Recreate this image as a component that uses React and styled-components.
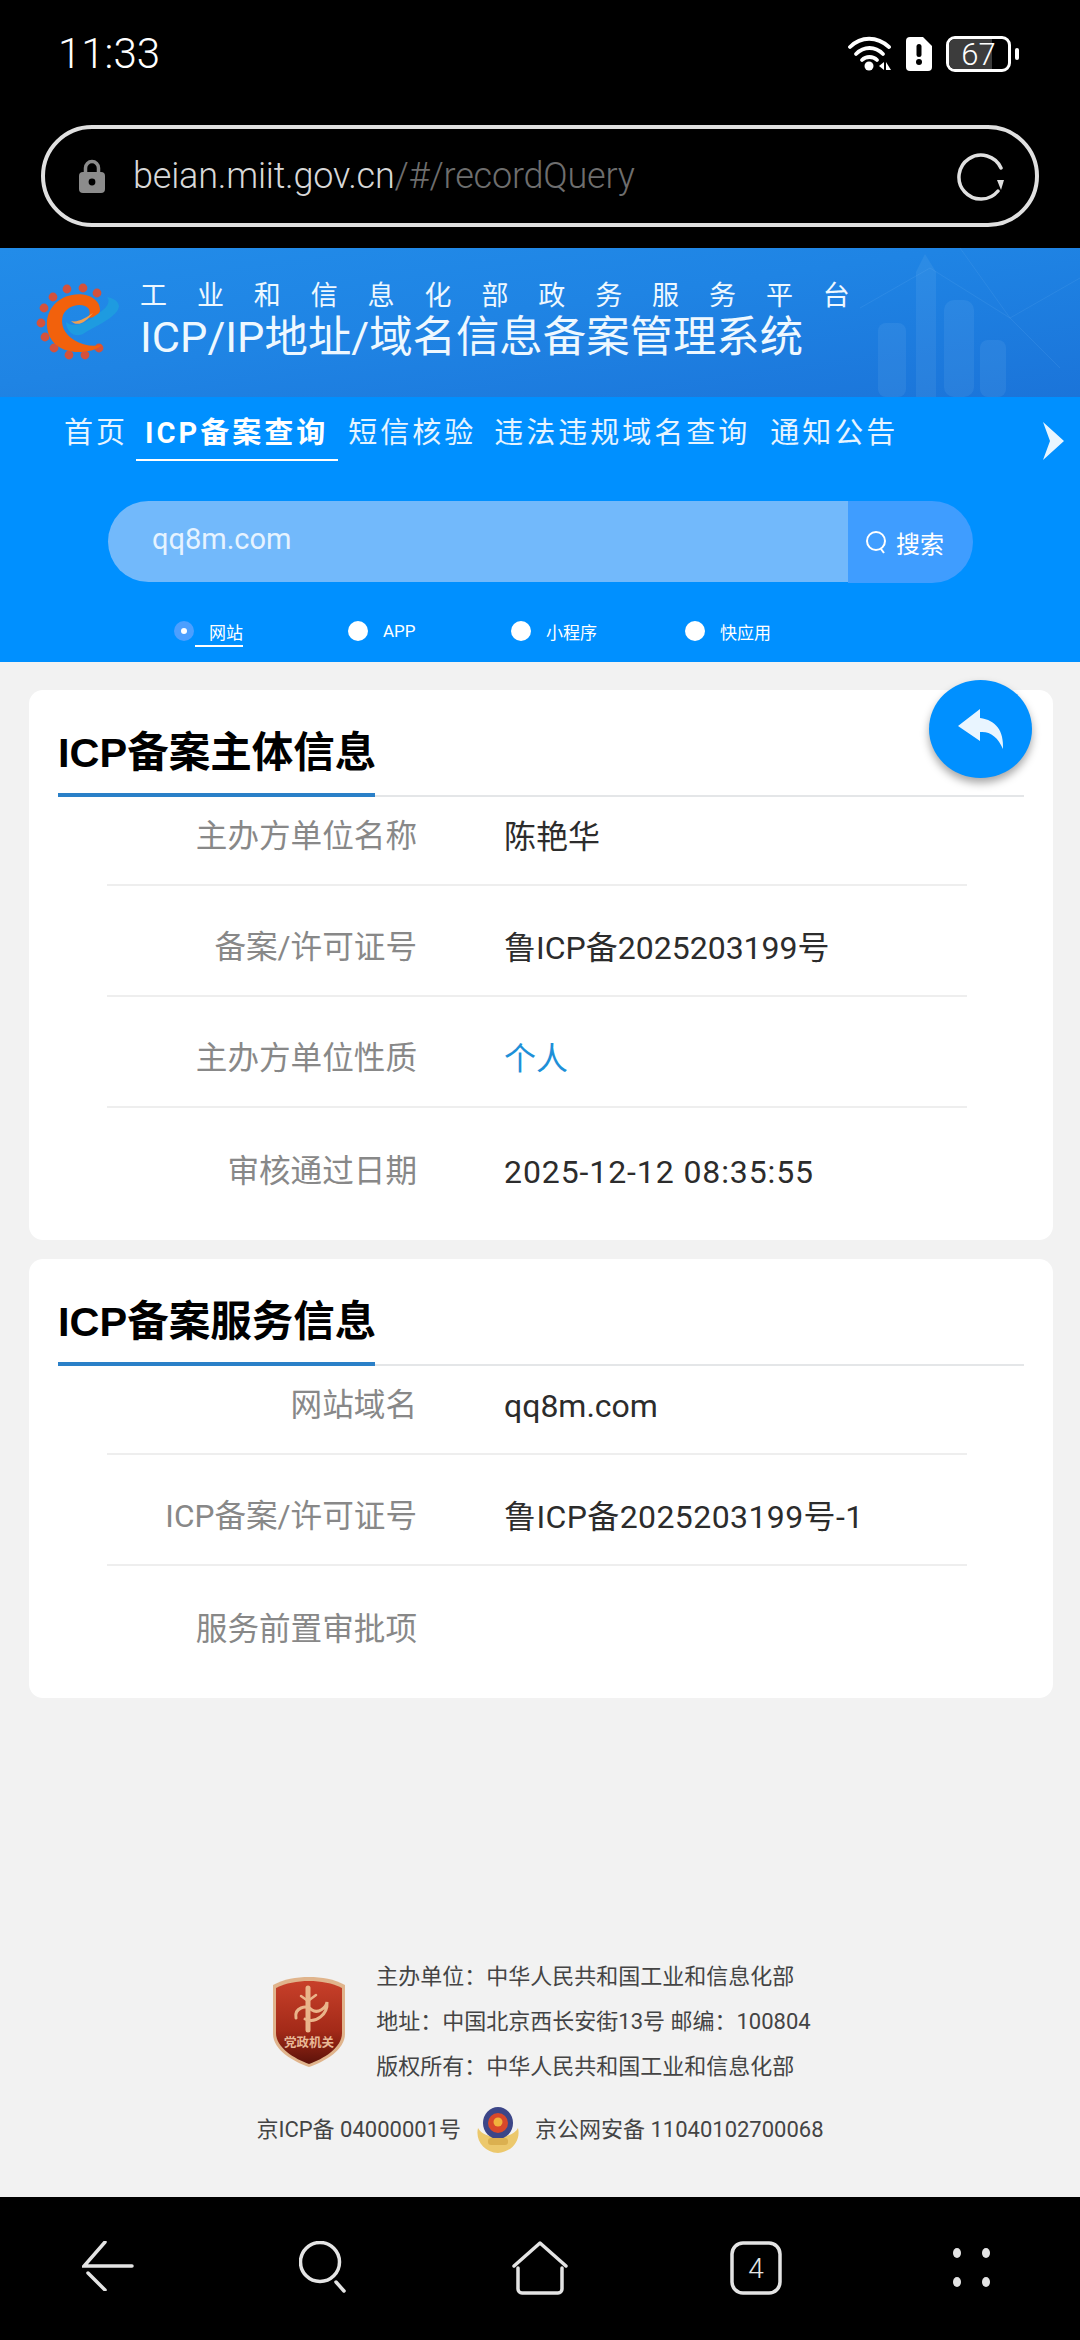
import React from 'react';
import styled, { createGlobalStyle } from 'styled-components';

const GlobalStyle = createGlobalStyle`
  html, body {
    margin: 0;
    padding: 0;
    background: #f2f2f2;
  }
  * {
    box-sizing: border-box;
  }
`;

const FONT = `Roboto, "Noto Sans CJK SC", sans-serif`;

const Page = styled.div`
  width: 1080px;
  height: 2340px;
  display: flex;
  flex-direction: column;
  overflow: hidden;
  background: #f2f2f2;
  font-family: ${FONT};
`;

const BrowserTop = styled.div`
  height: 248px;
  background: #000;
  padding: 0 41px 0 41px;
  flex: none;
`;

const StatusBar = styled.div`
  height: 125px;
  padding: 24px 20px 0 17px;
  display: flex;
  justify-content: space-between;
  align-items: flex-start;
  color: #fff;
`;

const Clock = styled.span`
  font-size: 42px;
  font-weight: 300;
  line-height: 60px;
`;

const StatusIcons = styled.div`
  display: flex;
  align-items: center;
  height: 60px;
  gap: 14px;
`;

const BatteryBox = styled.div`
  position: relative;
  width: 65px;
  height: 36px;
  border: 3px solid #fff;
  border-radius: 9px;
  display: flex;
  align-items: center;
  justify-content: center;
  font-size: 31px;
  font-weight: 300;
  overflow: hidden;
  color: #fff;
`;

const BatteryLevel = styled.div`
  position: absolute;
  inset: 0 16px 0 0;
  background: #3c3c3c;
`;

const BatteryText = styled.span`
  position: relative;
`;

const BatteryTip = styled.div`
  width: 4px;
  height: 12px;
  border-radius: 2px;
  background: #fff;
  margin-left: -10px;
`;

const AddressBar = styled.div`
  height: 102px;
  border: 4px solid #e0e0e0;
  border-radius: 51px;
  display: flex;
  align-items: center;
  padding: 0 27px 0 34px;
  gap: 28px;
`;

const Url = styled.div`
  flex: 1;
  font-size: 36px;
  font-weight: 300;
  letter-spacing: -0.2px;
  color: #d8d8d8;
`;

const UrlRest = styled.span`
  color: #6e6e6e;
`;

const Banner = styled.div`
  position: relative;
  height: 149px;
  flex: none;
  overflow: hidden;
  background: linear-gradient(172deg, #228ce9 0%, #1f84e4 45%, #1b74d9 100%);
  padding: 32px 0 0 140px;
  color: #eef8ff;
`;

const BannerArt = styled.svg`
  position: absolute;
  left: 0;
  top: 0;
`;

const BannerTitle = styled.div`
  position: relative;
  font-size: 27px;
  line-height: 32px;
  letter-spacing: 29.9px;
  white-space: nowrap;
`;

const BannerName = styled.div`
  position: relative;
  font-size: 43.4px;
  line-height: 52px;
  white-space: nowrap;
`;

const BlueArea = styled.div`
  flex: none;
  height: 265px;
  background: #0090ff;
  display: flex;
  flex-direction: column;
`;

const Nav = styled.div`
  position: relative;
  height: 104px;
  padding: 12px 0 0 64px;
  display: flex;
  align-items: flex-start;
`;

const NavItem = styled.div`
  position: relative;
  margin-left: ${(p) => p.$gap}px;
  font-size: 29px;
  line-height: 48px;
  letter-spacing: 3px;
  color: #e6f4ff;
  font-weight: ${(p) => (p.$active ? 700 : 400)};
  white-space: nowrap;
  ${(p) => p.$active && `
    color: #fff;
    &::after {
      content: '';
      position: absolute;
      left: -9px;
      right: -10px;
      bottom: -4px;
      height: 2px;
      background: #fff;
    }
  `}
`;

const NavArrow = styled.svg`
  position: absolute;
  left: 1041px;
  top: 25px;
`;

const SearchBar = styled.div`
  margin-left: 108px;
  width: 865px;
  height: 82px;
  display: flex;
  align-items: flex-start;
`;

const SearchInput = styled.div`
  width: 740px;
  height: 81px;
  background: #72b9fb;
  border-radius: 41px 0 0 41px;
  color: #e6f3ff;
  font-size: 29px;
  line-height: 76px;
  padding-left: 44px;
`;

const SearchButton = styled.div`
  width: 125px;
  height: 82px;
  background: #3f9dff;
  border-radius: 0 41px 41px 0;
  display: flex;
  align-items: center;
  padding-left: 17px;
  gap: 9px;
  color: #fff;
  font-size: 24px;
`;

const SearchGlass = styled.svg`
  flex: none;
`;

const RadioRow = styled.div`
  display: flex;
  margin-top: 32px;
  padding-left: 174px;
`;

const RadioItem = styled.div`
  width: ${(p) => p.$width}px;
  display: flex;
  align-items: center;
  height: 32px;
  gap: 15px;
  color: #fff;
  font-size: 17px;
`;

const RadioDot = styled.span`
  width: 20px;
  height: 20px;
  border-radius: 50%;
  display: flex;
  align-items: center;
  justify-content: center;
  background: ${(p) => (p.$on ? '#4c9fff' : '#fff')};
  &::after {
    content: '';
    width: 6px;
    height: 6px;
    border-radius: 50%;
    background: ${(p) => (p.$on ? '#fff' : 'transparent')};
  }
`;

const RadioLabel = styled.span`
  ${(p) => p.$on && `
    position: relative;
    &::after {
      content: '';
      position: absolute;
      left: -14px;
      right: 0;
      bottom: -3px;
      height: 1.5px;
      background: #fff;
    }
  `}
`;

const Content = styled.div`
  position: relative;
  flex: 1;
  padding: 28px 27px 0 29px;
  display: flex;
  flex-direction: column;
  gap: 19px;
`;

const Fab = styled.div`
  position: absolute;
  left: 929px;
  top: 18px;
  width: 103px;
  height: 98px;
  border-radius: 50%;
  background: #0090ff;
  box-shadow: 0 5px 8px rgba(0, 0, 0, 0.35);
  display: flex;
  align-items: center;
  justify-content: center;
`;

const Card = styled.section`
  background: #fff;
  border-radius: 14px;
  padding: 0 29px 21px;
`;

const CardHead = styled.div`
  height: 107px;
  display: flex;
  align-items: flex-end;
  border-bottom: 2px solid #e4e6e8;
`;

const CardTitle = styled.h2`
  margin: 0 0 -2px;
  width: 317px;
  height: 90px;
  padding-top: 18px;
  border-bottom: 4px solid #2a80c8;
  font-size: 41.5px;
  line-height: 56px;
  font-weight: 700;
  color: #000;
  white-space: nowrap;
  font-family: "Liberation Sans", "Noto Sans CJK SC", sans-serif;
`;

const Row = styled.div`
  margin: 0 57px 0 49px;
  height: 111px;
  display: grid;
  grid-template-columns: 310px 1fr;
  column-gap: 87px;
  align-items: end;
  padding-bottom: 15px;
  border-bottom: 2px solid #eeeeee;
  font-size: 32px;
  line-height: 64px;
  ${CardHead} + & {
    height: 89px;
  }
  &:last-child {
    border-bottom: none;
  }
`;

const RowLabel = styled.div`
  text-align: right;
  color: #888;
  font-size: 31.6px;
`;

const RowValue = styled.div`
  color: ${(p) => (p.$link ? '#1e90d8' : '#2c2c2c')};
  letter-spacing: ${(p) => p.$tracking || 0}px;
`;

const Footer = styled.footer`
  margin-top: auto;
  padding-bottom: 45px;
  display: flex;
  flex-direction: column;
  align-items: center;
  color: #444;
  font-size: 22px;
  line-height: 45px;
  margin-left: -29px;
  margin-right: -27px;
  white-space: nowrap;
`;

const FooterTop = styled.div`
  display: flex;
  align-items: center;
  gap: 30px;
  margin-left: 3px;
  position: relative;
  top: 2px;
`;

const FooterBottom = styled.div`
  display: flex;
  align-items: center;
  gap: 15px;
  margin-top: 20px;
  height: 45px;
`;

const BottomBar = styled.nav`
  flex: none;
  height: 143px;
  background: #000;
  display: grid;
  grid-template-columns: repeat(5, 216px);
  justify-items: center;
  padding-top: 44px;
  align-items: start;
`;

const info = [
  { label: '主办方单位名称', value: '陈艳华' },
  { label: '备案/许可证号', value: '鲁ICP备2025203199号' },
  { label: '主办方单位性质', value: '个人', link: true },
  { label: '审核通过日期', value: '2025-12-12 08:35:55', tracking: 0.9 },
];

const service = [
  { label: '网站域名', value: 'qq8m.com' },
  { label: 'ICP备案/许可证号', value: '鲁ICP备2025203199号-1', tracking: 0.4 },
  { label: '服务前置审批项', value: '' },
];

const navItems = [
  { text: '首页', gap: 0 },
  { text: 'ICP备案查询', gap: 17 },
  { text: '短信核验', gap: 20 },
  { text: '违法违规域名查询', gap: 18 },
  { text: '通知公告', gap: 20 },
].map((n, i) => ({ ...n, active: i === 1 }));

const radios = [
  { text: '网站', width: 174, on: true },
  { text: 'APP', width: 163 },
  { text: '小程序', width: 174 },
  { text: '快应用', width: 120 },
];

const gearDots = [
  [97, 45], [83, 40], [67, 41], [53, 49], [44, 60], [41, 75], [45, 89], [54, 100], [69, 107], [85, 107], [99, 100],
];

function InfoCard({ title, rows }) {
  return (
    <Card>
      <CardHead>
        <CardTitle>{title}</CardTitle>
      </CardHead>
      {rows.map((r) => (
        <Row key={r.label}>
          <RowLabel>{r.label}</RowLabel>
          <RowValue $link={r.link} $tracking={r.tracking}>{r.value}</RowValue>
        </Row>
      ))}
    </Card>
  );
}

function Wifi() {
  return (
    <svg width="44" height="36" viewBox="0 0 44 36" fill="none" stroke="#fff" strokeLinecap="round">
      <path d="M2 11C13 0 29 0 41 11" strokeWidth="3.8" />
      <path d="M8 18C16 10 27 10 35 18" strokeWidth="3.8" />
      <path d="M14 24C18 20 25 20 29 24" strokeWidth="3.8" />
      <circle cx="21" cy="30" r="4.5" fill="#fff" stroke="none" />
      <path d="M36 26l-5 4 5 4zM38 26l5 8h-5z" fill="#fff" stroke="none" />
    </svg>
  );
}

function Sim() {
  return (
    <svg width="26" height="34" viewBox="0 0 26 34">
      <path d="M4 0H17L26 9V30a4 4 0 0 1-4 4H4a4 4 0 0 1-4-4V4a4 4 0 0 1 4-4Z" fill="#fff" />
      <rect x="10.5" y="7" width="5" height="13" rx="2.5" fill="#000" />
      <circle cx="13" cy="25" r="3" fill="#000" />
    </svg>
  );
}

function BannerDecor() {
  return (
    <BannerArt width="1080" height="149" viewBox="0 0 1080 149">
      <g stroke="#8cc8f8" strokeWidth="1" opacity="0.12" fill="none">
        <path d="M860 60L930 20L1010 70L1080 30M1010 70L1060 120M960 0L1010 70" />
      </g>
      <g fill="#9ccff5" opacity="0.1">
        <path d="M916 149V24l9-18 11 18V149Z" />
        <rect x="878" y="75" width="28" height="74" rx="8" />
        <rect x="944" y="52" width="30" height="97" rx="10" />
        <rect x="980" y="92" width="26" height="57" rx="8" />
      </g>
      {gearDots.map(([x, y]) => (
        <circle key={x + '-' + y} cx={x} cy={y} r="4.4" fill="#d4523c" />
      ))}
      <path
        d="M100 62C100 50 85 44 72 47C55 50 46 64 47 78C48 95 62 104 78 104C88 104 96 102 102 97C92 99 82 97 74 92C64 86 60 76 63 67C67 58 78 55 85 58C90 60 91 65 88 70C94 70 100 67 100 62Z"
        fill="#f2610c"
      />
      <path d="M66 74C66 84 76 92 86 84C100 76 118 68 119 58C118 52 112 50 107 49C112 56 104 62 92 70C84 76 72 80 66 74Z" fill="#1e9be0" />
      <path d="M71 73C78 80 87 73 93 65C87 69 78 75 71 73Z" fill="#f0a050" />
    </BannerArt>
  );
}

function PartyBadge() {
  return (
    <svg width="74" height="92" viewBox="0 0 74 92">
      <defs>
        <linearGradient id="badgeFill" x1="0" y1="0" x2="0" y2="1">
          <stop offset="0" stopColor="#c8402a" />
          <stop offset="0.6" stopColor="#a32a18" />
          <stop offset="1" stopColor="#5c120a" />
        </linearGradient>
      </defs>
      <path d="M37 1C50 1 62 3 73 9V58C73 74 52 86 37 91C22 86 1 74 1 58V9C12 3 24 1 37 1Z" fill="#e0b48c" />
      <path d="M37 5C49 5 60 7 70 12V57C70 72 51 83 37 88C23 83 4 72 4 57V12C14 7 25 5 37 5Z" fill="url(#badgeFill)" />
      <g stroke="#eab48a" fill="none" strokeLinecap="round">
        <path d="M36 12V54" strokeWidth="5" />
        <path d="M29 20L36 25L44 19" strokeWidth="2.5" />
        <path d="M24 42C22 32 34 28 40 34C46 38 54 32 55 26C56 38 44 48 33 43" strokeWidth="3" />
      </g>
      <text x="37" y="71" textAnchor="middle" fontSize="12.5" fontWeight="700" fontFamily='"Noto Sans CJK SC", sans-serif' fill="#e8b896">
        党政机关
      </text>
    </svg>
  );
}

function PoliceBadge() {
  return (
    <svg width="44" height="48" viewBox="0 0 44 48">
      <path d="M2 22C-1 34 8 46 22 47C36 46 45 34 42 22C36 34 8 34 2 22Z" fill="#ecc86c" />
      <ellipse cx="22" cy="17" rx="15" ry="16" fill="#3c4688" />
      <circle cx="22" cy="17" r="10" fill="#d9482a" />
      <circle cx="22" cy="16" r="4.5" fill="#f2b23c" />
      <rect x="12" y="32" width="20" height="7" rx="3" fill="#dbb050" />
    </svg>
  );
}

export default function App() {
  return (
    <Page>
      <GlobalStyle />
      <BrowserTop>
        <StatusBar>
          <Clock>11:33</Clock>
          <StatusIcons>
            <Wifi />
            <Sim />
            <BatteryBox>
              <BatteryLevel />
              <BatteryText>67</BatteryText>
            </BatteryBox>
            <BatteryTip />
          </StatusIcons>
        </StatusBar>
        <AddressBar>
          <svg width="26" height="34" viewBox="0 0 26 34">
            <path d="M6.5 15V9a6.5 6.5 0 0 1 13 0v6" fill="none" stroke="#8c8c8c" strokeWidth="3.5" />
            <rect x="0" y="13" width="26" height="21" rx="4" fill="#8c8c8c" />
            <circle cx="13" cy="23" r="3.4" fill="#000" />
          </svg>
          <Url>
            beian.miit.gov.cn<UrlRest>/#/recordQuery</UrlRest>
          </Url>
          <svg width="52" height="52" viewBox="0 0 52 52" fill="none">
            <path d="M45 18A22 22 0 1 0 42 41" stroke="#e0e0e0" strokeWidth="3.5" strokeLinecap="round" />
            <path d="M41 30l7 0-3 10z" fill="#e0e0e0" />
          </svg>
        </AddressBar>
      </BrowserTop>

      <Banner>
        <BannerDecor />
        <BannerTitle>工业和信息化部政务服务平台</BannerTitle>
        <BannerName>ICP/IP地址/域名信息备案管理系统</BannerName>
      </Banner>

      <BlueArea>
        <Nav>
          {navItems.map((n) => (
            <NavItem key={n.text} $gap={n.gap} $active={n.active}>
              {n.text}
            </NavItem>
          ))}
          <NavArrow width="24" height="38" viewBox="0 0 24 38">
            <path d="M2 0L23 19L2 38L9 19Z" fill="#e8f5ff" />
          </NavArrow>
        </Nav>
        <SearchBar>
          <SearchInput>qq8m.com</SearchInput>
          <SearchButton>
            <SearchGlass width="22" height="24" viewBox="0 0 22 24" fill="none" stroke="#fff" strokeWidth="2">
              <circle cx="11" cy="11" r="9" />
              <path d="M16 19l3 4" />
            </SearchGlass>
            搜索
          </SearchButton>
        </SearchBar>
        <RadioRow>
          {radios.map((r) => (
            <RadioItem key={r.text} $width={r.width}>
              <RadioDot $on={r.on} />
              <RadioLabel $on={r.on}>{r.text}</RadioLabel>
            </RadioItem>
          ))}
        </RadioRow>
      </BlueArea>

      <Content>
        <Fab>
          <svg width="46" height="40" viewBox="0 0 46 40">
            <path d="M22 0L0 17L22 32V23C32 22 40 28 45 40C46 22 38 11 22 9Z" fill="#e9f5ff" />
          </svg>
        </Fab>
        <InfoCard title="ICP备案主体信息" rows={info} />
        <InfoCard title="ICP备案服务信息" rows={service} />
        <Footer>
          <FooterTop>
            <PartyBadge />
            <div>
              <div>主办单位：中华人民共和国工业和信息化部</div>
              <div>地址：中国北京西长安街13号 邮编：100804</div>
              <div>版权所有：中华人民共和国工业和信息化部</div>
            </div>
          </FooterTop>
          <FooterBottom>
            <span>京ICP备 04000001号</span>
            <PoliceBadge />
            <span>京公网安备 11040102700068</span>
          </FooterBottom>
        </Footer>
      </Content>

      <BottomBar>
        <svg width="52" height="50" viewBox="0 0 52 50" fill="none" stroke="#e4e4e4" strokeWidth="3.5" strokeLinecap="round">
          <path d="M23 1L2 25H50" />
          <path d="M6 32L23 49" />
        </svg>
        <svg width="50" height="52" viewBox="0 0 50 52" fill="none" stroke="#e4e4e4" strokeWidth="3.5" strokeLinecap="round">
          <circle cx="21" cy="21" r="19.5" />
          <path d="M37 41L45 50" />
        </svg>
        <svg width="56" height="54" viewBox="0 0 56 54" fill="none" stroke="#e4e4e4" strokeWidth="3.5" strokeLinecap="round" strokeLinejoin="round">
          <path d="M2 25L28 2L54 25" />
          <path d="M6 27V48a4 4 0 0 0 4 4H46a4 4 0 0 0 4-4V27" />
        </svg>
        <svg width="52" height="54" viewBox="0 0 52 54" fill="none">
          <rect x="2" y="2" width="48" height="50" rx="11" stroke="#e4e4e4" strokeWidth="3.5" />
          <text x="26" y="37" textAnchor="middle" fontFamily="Roboto, sans-serif" fontWeight="300" fontSize="28" fill="#e4e4e4">4</text>
        </svg>
        <svg width="44" height="46" viewBox="0 0 44 46" fill="#e4e4e4" style={{ marginTop: 6 }}>
          <ellipse cx="7" cy="6" rx="4" ry="5" />
          <ellipse cx="36" cy="6" rx="4" ry="5" />
          <ellipse cx="7" cy="35" rx="4" ry="5" />
          <ellipse cx="36" cy="35" rx="4" ry="5" />
        </svg>
      </BottomBar>
    </Page>
  );
}
